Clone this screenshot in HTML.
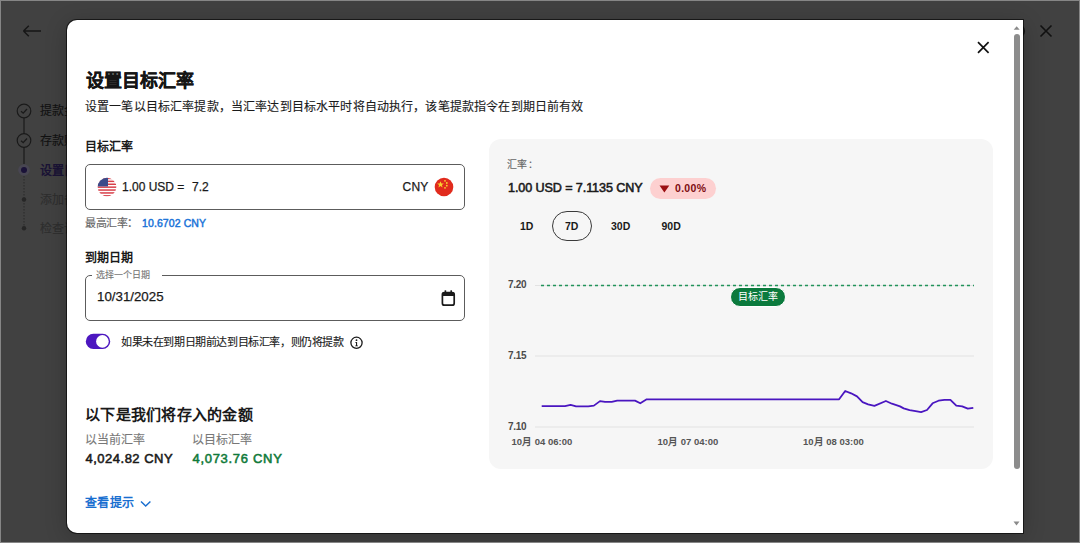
<!DOCTYPE html>
<html lang="zh-CN"><head><meta charset="utf-8">
<style>
*{margin:0;padding:0;box-sizing:border-box}
html,body{width:1080px;height:543px;overflow:hidden;background:#414141}
body{position:relative;font-family:"Liberation Sans",sans-serif;color:#1a1a1a}
.t{position:absolute;white-space:nowrap;line-height:1}
.rg{-webkit-text-stroke:0.25px currentColor}
.rc{-webkit-text-stroke:0.12px currentColor}
#frame{position:absolute;left:0;top:0;width:1080px;height:543px;border:1px solid #868686;pointer-events:none}
#modal{position:absolute;left:67px;top:20px;width:956px;height:513px;background:#fff;border-radius:10px 0 0 10px;box-shadow:0 0 0 1px rgba(0,0,0,.6),0 4px 22px rgba(0,0,0,.22)}
.lbl{font-weight:bold;font-size:12px;color:#1a1a1a}
.box{position:absolute;border:1.2px solid #5c5c5c;border-radius:5px}
#panel{position:absolute;left:489px;top:139px;width:504px;height:330px;background:#f6f6f6;border-radius:12px}
</style></head><body>
<!-- background page -->
<svg class="t" style="left:20px;top:22px" width="24" height="18" viewBox="0 0 24 18"><path d="M3.5 9H21M3.5 9L8.8 3.8M3.5 9L8.8 14.2" stroke="#161616" stroke-width="1.5" fill="none"/></svg>
<svg class="t" style="left:1036px;top:21px" width="20" height="20" viewBox="0 0 20 20"><path d="M4.5 4.5L15.5 15.5M15.5 4.5L4.5 15.5" stroke="#111" stroke-width="1.6"/></svg>
<svg class="t" style="left:10px;top:95px" width="30" height="145" viewBox="0 0 30 145">
 <line x1="14" y1="23" x2="14" y2="39" stroke="#1a1a1a" stroke-width="1.2"/>
 <line x1="14" y1="52" x2="14" y2="69" stroke="#1a1a1a" stroke-width="1.2"/>
 <line x1="14" y1="81" x2="14" y2="133" stroke="#2a2a2a" stroke-width="1" stroke-dasharray="1.5 1.5"/>
 <circle cx="14" cy="16" r="6.8" fill="none" stroke="#1a1a1a" stroke-width="1.2"/>
 <path d="M11 16.2L13.2 18.2L17 14" fill="none" stroke="#1a1a1a" stroke-width="1.3"/>
 <circle cx="14" cy="45.5" r="6.8" fill="none" stroke="#1a1a1a" stroke-width="1.2"/>
 <path d="M11 45.7L13.2 47.7L17 43.5" fill="none" stroke="#1a1a1a" stroke-width="1.3"/>
 <circle cx="14" cy="75" r="5.8" fill="#484652"/>
 <circle cx="14" cy="75" r="3" fill="#1a1238"/>
 <circle cx="14" cy="104.5" r="2.2" fill="#262626"/>
 <circle cx="14" cy="133.3" r="2.2" fill="#262626"/>
</svg>
<div class="t rc" style="left:40px;top:105px;font-size:12px;color:#111">提款金额</div>
<div class="t rc" style="left:40px;top:135px;font-size:12px;color:#111">存款账户</div>
<div class="t" style="left:40px;top:164.5px;font-size:12px;color:#1a1335;font-weight:bold">设置目标</div>
<div class="t rc" style="left:40px;top:194px;font-size:12px;color:#2e2e2e">添加备注</div>
<div class="t rc" style="left:40px;top:223px;font-size:12px;color:#2e2e2e">检查详情</div>

<svg class="t" style="left:1008px;top:21px" width="20" height="20" viewBox="0 0 20 20"><circle cx="10" cy="10" r="6.3" fill="none" stroke="#151515" stroke-width="1.6"/></svg>
<div id="modal"></div>
<svg class="t" style="left:1011px;top:20px" width="12" height="513" viewBox="0 0 12 513">
 <path d="M2.7 9.8L5.7 6.3L8.7 9.8Z" fill="#8a8a8a"/>
 <rect x="3" y="14" width="6" height="435" rx="3" fill="#8c8c8c"/>
 <path d="M2.5 501.5L5.5 505.5L8.5 501.5Z" fill="#8a8a8a"/>
</svg>
<svg class="t" style="left:973px;top:37px" width="20" height="20" viewBox="0 0 20 20"><path d="M5 5.2L15.6 15.8M15.6 5.2L5 15.8" stroke="#111" stroke-width="1.7"/></svg>
<div class="t" style="left:86px;top:71.5px;font-size:18px;font-weight:bold;-webkit-text-stroke:0.3px currentColor;color:#151515">设置目标汇率</div>
<div class="t rc" style="left:85px;top:100.5px;font-size:12px;letter-spacing:0.16px;color:#1a1a1a">设置一笔以目标汇率提款，当汇率达到目标水平时将自动执行，该笔提款指令在到期日前有效</div>
<div class="t lbl" style="left:85px;top:141px">目标汇率</div>
<div class="box" style="left:85px;top:164px;width:380px;height:46px"></div>
<svg class="t" style="left:97px;top:177px" width="20" height="20" viewBox="0 0 20 20">
 <defs><clipPath id="cu"><circle cx="10" cy="10" r="9.3"/></clipPath></defs>
 <g clip-path="url(#cu)">
  <rect width="20" height="20" fill="#fff"/>
  <rect y="0.7" width="20" height="1.5" fill="#d8404a"/>
  <rect y="3.6" width="20" height="1.5" fill="#d8404a"/>
  <rect y="6.5" width="20" height="1.5" fill="#d8404a"/>
  <rect y="9.4" width="20" height="1.5" fill="#d8404a"/>
  <rect y="12.3" width="20" height="1.5" fill="#d8404a"/>
  <rect y="15.2" width="20" height="1.5" fill="#d8404a"/>
  <rect y="18.1" width="20" height="1.5" fill="#d8404a"/>
  <rect width="11" height="9.4" fill="#3b4a8a"/>
 </g>
</svg>
<div class="t rg" style="left:122px;top:181px;font-size:12px;color:#1a1a1a">1.00 USD =</div>
<div class="t rg" style="left:192px;top:181px;font-size:12px;color:#1a1a1a">7.2</div>
<div class="t rg" style="left:402.5px;top:181px;font-size:12px;letter-spacing:0.25px;color:#1a1a1a">CNY</div>
<svg class="t" style="left:434px;top:177px" width="20" height="20" viewBox="0 0 20 20">
 <circle cx="10" cy="10" r="9.3" fill="#e12b1d"/>
 <path d="M6.5 4.2L7.4 6.6L9.9 6.6L7.9 8.1L8.6 10.5L6.5 9L4.4 10.5L5.1 8.1L3.1 6.6L5.6 6.6Z" fill="#f8d330"/>
 <circle cx="11" cy="3.8" r="0.9" fill="#f8d330"/><circle cx="12.8" cy="6" r="0.9" fill="#f8d330"/>
 <circle cx="12.8" cy="8.7" r="0.9" fill="#f8d330"/><circle cx="11" cy="10.8" r="0.9" fill="#f8d330"/>
</svg>
<div class="t rc" style="left:85px;top:218px;font-size:11px;letter-spacing:-0.4px;color:#666">最高汇率：</div>
<div class="t" style="left:142px;top:218px;font-size:10.5px;letter-spacing:0.1px;-webkit-text-stroke:0.45px currentColor;color:#1a73d8">10.6702 CNY</div>

<div class="t lbl" style="left:85px;top:252px">到期日期</div>
<div class="box" style="left:85px;top:275px;width:380px;height:46px"></div>
<div class="t" style="left:92px;top:270px;width:70px;height:10px;background:#fff"></div>
<div class="t rc" style="left:96px;top:271px;font-size:9px;color:#777">选择一个日期</div>
<div class="t rg" style="left:97px;top:290px;font-size:13.3px;color:#1a1a1a">10/31/2025</div>
<svg class="t" style="left:440px;top:289px" width="16" height="18" viewBox="0 0 16 18">
 <rect x="2.4" y="3.6" width="11.8" height="12.6" rx="2" fill="none" stroke="#1a1a1a" stroke-width="1.7"/>
 <rect x="2.4" y="3.6" width="11.8" height="3.4" fill="#1a1a1a"/>
 <rect x="4.6" y="1.3" width="1.6" height="3" fill="#1a1a1a"/>
 <rect x="10.4" y="1.3" width="1.6" height="3" fill="#1a1a1a"/>
</svg>
<svg class="t" style="left:85px;top:332.5px" width="26" height="17" viewBox="0 0 26 17">
 <rect x="0.8" y="0.8" width="24.4" height="15.2" rx="7.6" fill="#4c17c0"/>
 <circle cx="17.4" cy="8.4" r="6.3" fill="#fff"/>
</svg>
<div class="t rc" style="left:121px;top:336.6px;font-size:11px;letter-spacing:-0.4px;color:#1a1a1a">如果未在到期日期前达到目标汇率，则仍将提款</div>
<svg class="t" style="left:349px;top:335.5px" width="15" height="15" viewBox="0 0 15 15">
 <circle cx="7.5" cy="6.8" r="5.6" fill="none" stroke="#1a1a1a" stroke-width="1.3"/>
 <circle cx="7.5" cy="4.2" r="0.9" fill="#1a1a1a"/>
 <path d="M6.3 6H8.1V9.4H8.9V10.2H6.2V9.4H7V6.8H6.3Z" fill="#1a1a1a"/>
</svg>

<div class="t" style="left:85px;top:407px;font-size:15px;letter-spacing:0.25px;font-weight:bold;color:#1a1a1a">以下是我们将存入的金额</div>
<div class="t rc" style="left:85px;top:434px;font-size:12px;color:#777">以当前汇率</div>
<div class="t" style="left:85.5px;top:451.5px;font-size:13px;letter-spacing:0.5px;-webkit-text-stroke:0.55px currentColor;color:#1a1a1a">4,024.82 CNY</div>
<div class="t rc" style="left:192px;top:434px;font-size:12px;color:#777">以目标汇率</div>
<div class="t" style="left:192.5px;top:451.5px;font-size:13px;letter-spacing:0.7px;-webkit-text-stroke:0.55px currentColor;color:#107a3a">4,073.76 CNY</div>
<div class="t" style="left:85px;top:497px;font-size:12px;letter-spacing:0.3px;font-weight:bold;color:#1a6fd0">查看提示</div>
<svg class="t" style="left:138px;top:497.5px" width="14" height="12" viewBox="0 0 14 12"><path d="M3 3.5L7.7 8L12.4 3.5" fill="none" stroke="#1a6fd0" stroke-width="1.5"/></svg>

<div id="panel"></div>
<div class="t rc" style="left:507px;top:160px;font-size:10px;letter-spacing:0.3px;color:#666">汇率：</div>
<div class="t" style="left:508px;top:182px;font-size:12.6px;letter-spacing:-0.1px;-webkit-text-stroke:0.55px currentColor;color:#1a1a1a">1.00 USD = 7.1135 CNY</div>
<div class="t" style="left:650px;top:178px;width:66px;height:21px;border-radius:11px;background:#fdd0d0"></div>
<svg class="t" style="left:658px;top:183px" width="12" height="11" viewBox="0 0 12 11"><path d="M1.5 2.5H11.3L6.4 9.5Z" fill="#9b0f12"/></svg>
<div class="t" style="left:675px;top:183px;font-size:10.5px;letter-spacing:0.3px;font-weight:bold;color:#7e0c12">0.00%</div>
<div class="t" style="left:551.5px;top:211px;width:40px;height:29.5px;border-radius:15px;border:1.4px solid #3a3a3a"></div>
<div class="t" style="left:520px;top:221px;font-size:10.5px;font-weight:bold;color:#1a1a1a">1D</div>
<div class="t" style="left:565px;top:221px;font-size:10.5px;font-weight:bold;color:#1a1a1a">7D</div>
<div class="t" style="left:611px;top:221px;font-size:10.5px;font-weight:bold;color:#1a1a1a">30D</div>
<div class="t" style="left:661.5px;top:221px;font-size:10.5px;font-weight:bold;color:#1a1a1a">90D</div>

<svg class="t" style="left:489px;top:139px" width="504" height="330" viewBox="489 139 504 330">
 <line x1="535" y1="285.5" x2="974" y2="285.5" stroke="#e2e2e2" stroke-width="1"/>
 <line x1="535" y1="356" x2="974" y2="356" stroke="#e2e2e2" stroke-width="1"/>
 <line x1="535" y1="427" x2="974" y2="427" stroke="#e2e2e2" stroke-width="1"/>
 <line x1="541" y1="285.5" x2="974" y2="285.5" stroke="#21935a" stroke-width="1.3" stroke-dasharray="3 3"/>
 <polyline fill="none" stroke="#4a16c0" stroke-width="1.8" stroke-linejoin="round" points="541.7,406.1 565,406.1 570.6,404.8 576.1,406.3 588.3,406.3 593.9,405.6 600,401.1 605,401.9 611.7,401.9 617.2,400.6 635,400.6 640.3,403.3 646.7,399.3 839.1,399.3 845.2,391 851.1,393.3 857,396.4 862.6,402.1 868.1,404.3 874.4,405.9 885.9,401 891.9,403.7 900,406.4 903.7,408.4 909.6,410.1 915.6,411.1 921.1,412.1 927,410 932.6,403.3 938.5,400.7 944.4,399.8 950.4,399.8 956.3,405.7 962.2,406.4 967.8,408.7 973.3,407.9"/>
</svg>
<div class="t" style="left:729.8px;top:287px;width:56.5px;height:20px;border-radius:10px;background:#0b7a3d;border:1px solid #fff"></div>
<div class="t" style="left:738px;top:292px;font-size:10px;color:#fff">目标汇率</div>
<div class="t" style="left:508px;top:280px;font-size:10px;letter-spacing:-0.3px;font-weight:bold;color:#4a4a4a">7.20</div>
<div class="t" style="left:508px;top:351px;font-size:10px;letter-spacing:-0.3px;font-weight:bold;color:#4a4a4a">7.15</div>
<div class="t" style="left:508px;top:422px;font-size:10px;letter-spacing:-0.3px;font-weight:bold;color:#4a4a4a">7.10</div>
<div class="t" style="left:511.5px;top:437px;font-size:9.5px;font-weight:bold;color:#555">10月 04 06:00</div>
<div class="t" style="left:657.5px;top:437px;font-size:9.5px;font-weight:bold;color:#555">10月 07 04:00</div>
<div class="t" style="left:803px;top:437px;font-size:9.5px;font-weight:bold;color:#555">10月 08 03:00</div>
<div id="frame"></div>
</body></html>
